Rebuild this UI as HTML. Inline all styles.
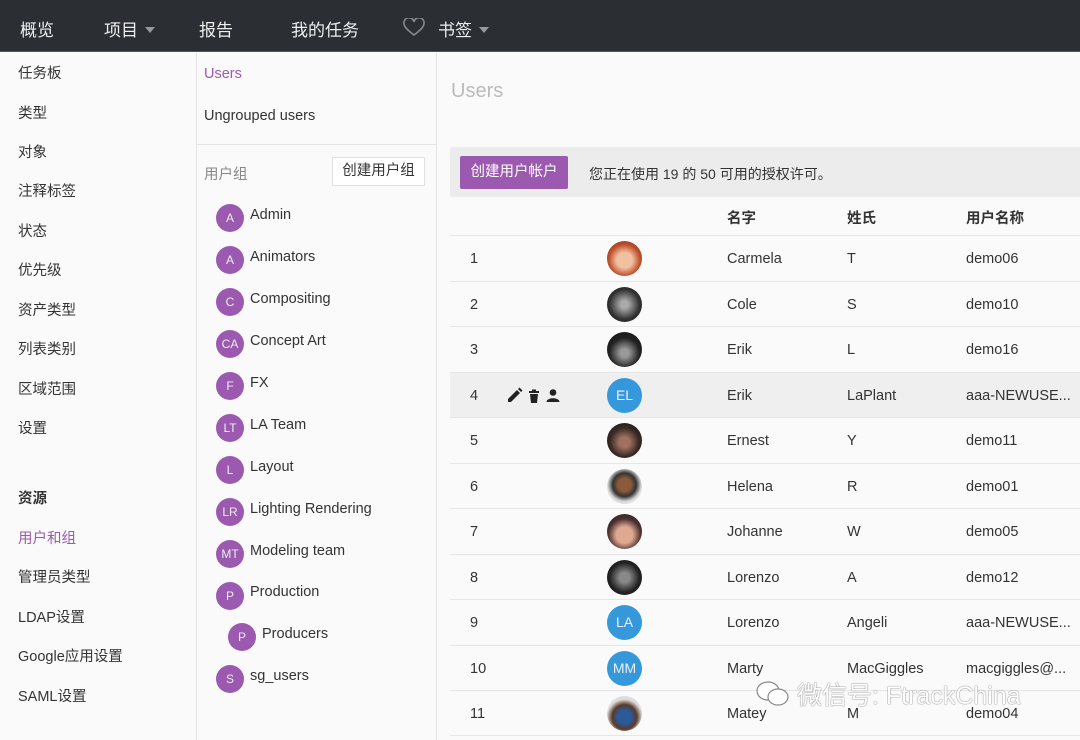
<!DOCTYPE html>
<html><head><meta charset="utf-8"><style>
*{margin:0;padding:0;box-sizing:border-box}
body{width:1080px;height:740px;overflow:hidden;background:#fafafa;font-family:"Liberation Sans","Noto Sans CJK SC",sans-serif;color:#333;position:relative}
.a{position:absolute;white-space:nowrap}
.nav{position:absolute;left:0;top:0;width:1080px;height:52px;background:#2b2e33;border-bottom:1px solid #555}
.nav .a{color:#eee;font-size:17px;top:16px}
.chev{display:inline-block;width:0;height:0;border-left:5px solid transparent;border-right:5px solid transparent;border-top:6px solid #999;margin-left:7px;position:relative;top:-3px}
.ls .a{font-size:14.5px;color:#333;left:18px}
.g{position:absolute;left:216px;width:28px;height:28px;border-radius:50%;background:#9b59b0;color:#eee;font-size:12px;text-align:center;line-height:28px}
.gt{position:absolute;left:250px;font-size:14.5px;color:#333}
.row{position:absolute;left:450px;width:630px;height:45.5px;border-top:1px solid #e6e6e6;font-size:14.5px}
.row span{position:absolute;top:15px}
.av{position:absolute;left:157px;top:5px;width:35px;height:35px;border-radius:50%}
.in{background:#3498db;color:#eef;text-align:center;line-height:35px;font-size:14px}
</style></head><body>
<div class="nav">
<div class="a" style="left:20px">概览</div>
<div class="a" style="left:104px">项目<span class="chev"></span></div>
<div class="a" style="left:199px">报告</div>
<div class="a" style="left:291px">我的任务</div>
<svg class="a" style="left:403px;top:18px" width="22" height="19" viewBox="0 0 22 19"><path d="M11 17 C3 11 1 8 1 5.5 A4.5 4.5 0 0 1 11 4 A4.5 4.5 0 0 1 21 5.5 C21 8 19 11 11 17Z" fill="none" stroke="#888" stroke-width="1.6"/></svg>
<div class="a" style="left:438px">书签<span class="chev"></span></div>
</div>
<div style="position:absolute;left:196px;top:53px;width:1px;height:687px;background:#e4e4e4"></div>
<div style="position:absolute;left:436px;top:53px;width:1px;height:687px;background:#e4e4e4"></div>
<div class="ls">
<div class="a" style="top:62px">任务板</div>
<div class="a" style="top:102px">类型</div>
<div class="a" style="top:141px">对象</div>
<div class="a" style="top:180px">注释标签</div>
<div class="a" style="top:220px">状态</div>
<div class="a" style="top:259px">优先级</div>
<div class="a" style="top:299px">资产类型</div>
<div class="a" style="top:338px">列表类别</div>
<div class="a" style="top:378px">区域范围</div>
<div class="a" style="top:417px">设置</div>
<div class="a" style="top:487px;font-weight:bold">资源</div>
<div class="a" style="top:527px;color:#9b59b0">用户和组</div>
<div class="a" style="top:566px">管理员类型</div>
<div class="a" style="top:606px">LDAP设置</div>
<div class="a" style="top:645px">Google应用设置</div>
<div class="a" style="top:685px">SAML设置</div>
</div>
<div class="a" style="left:204px;top:66px;font-size:14.5px;color:#9b59b0">Users</div>
<div class="a" style="left:204px;top:108px;font-size:14.5px">Ungrouped users</div>
<div style="position:absolute;left:197px;top:144px;width:239px;height:1px;background:#e4e4e4"></div>
<div class="a" style="left:204px;top:163px;font-size:14.5px;color:#888">用户组</div>
<div class="a" style="left:332px;top:157px;width:93px;height:29px;border:1px solid #e0e0e0;background:#fff;font-size:14.5px;text-align:center;line-height:27px">创建用户组</div>
<div class="g" style="top:204px">A</div><div class="gt a" style="top:207px">Admin</div>
<div class="g" style="top:246px">A</div><div class="gt a" style="top:249px">Animators</div>
<div class="g" style="top:288px">C</div><div class="gt a" style="top:291px">Compositing</div>
<div class="g" style="top:330px">CA</div><div class="gt a" style="top:333px">Concept Art</div>
<div class="g" style="top:372px">F</div><div class="gt a" style="top:375px">FX</div>
<div class="g" style="top:414px">LT</div><div class="gt a" style="top:417px">LA Team</div>
<div class="g" style="top:456px">L</div><div class="gt a" style="top:459px">Layout</div>
<div class="g" style="top:498px">LR</div><div class="gt a" style="top:501px">Lighting Rendering</div>
<div class="g" style="top:540px">MT</div><div class="gt a" style="top:543px">Modeling team</div>
<div class="g" style="top:582px">P</div><div class="gt a" style="top:584px">Production</div>
<div class="g" style="top:623px;left:228px">P</div><div class="gt a" style="top:626px;left:262px">Producers</div>
<div class="g" style="top:665px">S</div><div class="gt a" style="top:668px">sg_users</div>

<div class="a" style="left:451px;top:80px;font-size:20px;color:#bbb">Users</div>
<div style="position:absolute;left:450px;top:147px;width:630px;height:50px;background:#ececec"></div>
<div class="a" style="left:460px;top:156px;width:108px;height:33px;background:#9b59b0;border-radius:2px;color:#fff;font-size:14.5px;text-align:center;line-height:33px">创建用户帐户</div>
<div class="a" style="left:589px;top:164px;font-size:14px">您正在使用 19 的 50 可用的授权许可。</div>
<div class="a" style="left:727px;top:207px;font-size:14.5px;font-weight:bold">名字</div>
<div class="a" style="left:847px;top:207px;font-size:14.5px;font-weight:bold">姓氏</div>
<div class="a" style="left:966px;top:207px;font-size:14.5px;font-weight:bold">用户名称</div>

<div class="row" style="top:235px"><span style="left:20px">1</span><div class="av" style="background:radial-gradient(circle at 50% 55%,#f0c0a0 30%,#c0502a 60%,#6a3020)"></div><span style="left:277px">Carmela</span><span style="left:397px">T</span><span style="left:516px">demo06</span></div>
<div class="row" style="top:280.5px"><span style="left:20px">2</span><div class="av" style="background:radial-gradient(circle,#aaa 15%,#333 60%,#111)"></div><span style="left:277px">Cole</span><span style="left:397px">S</span><span style="left:516px">demo10</span></div>
<div class="row" style="top:326px"><span style="left:20px">3</span><div class="av" style="background:radial-gradient(circle at 50% 60%,#999 15%,#222 55%,#111)"></div><span style="left:277px">Erik</span><span style="left:397px">L</span><span style="left:516px">demo16</span></div>
<div class="row" style="top:371.5px;background:#efefef"><span style="left:20px">4</span>
<svg style="position:absolute;left:56px;top:14px" width="56" height="18" viewBox="0 0 56 18"><path d="M2 15 L2 12 L11 3 L14 6 L5 15Z M12 2 L13.5 0.5 L16.5 3.5 L15 5Z" fill="#222"/><path d="M23 4 H33 V6 H23Z M26 2.5 H30 V4 H26Z M24 7 H32 L31 16 H25Z" fill="#222"/><circle cx="47" cy="5.5" r="3.3" fill="#222"/><path d="M40.5 15 C40.5 10 53.5 10 53.5 15Z" fill="#222"/></svg>
<div class="av in">EL</div><span style="left:277px">Erik</span><span style="left:397px">LaPlant</span><span style="left:516px">aaa-NEWUSE...</span></div>
<div class="row" style="top:417px"><span style="left:20px">5</span><div class="av" style="background:radial-gradient(circle at 50% 55%,#a07060 20%,#3a2a25 55%,#111)"></div><span style="left:277px">Ernest</span><span style="left:397px">Y</span><span style="left:516px">demo11</span></div>
<div class="row" style="top:462.5px"><span style="left:20px">6</span><div class="av" style="background:radial-gradient(circle at 50% 45%,#8a5a3a 25%,#333 45%,#ddd 65%)"></div><span style="left:277px">Helena</span><span style="left:397px">R</span><span style="left:516px">demo01</span></div>
<div class="row" style="top:508px"><span style="left:20px">7</span><div class="av" style="background:radial-gradient(circle at 50% 60%,#e0a890 30%,#4a3030 60%,#2a1a1a)"></div><span style="left:277px">Johanne</span><span style="left:397px">W</span><span style="left:516px">demo05</span></div>
<div class="row" style="top:553.5px"><span style="left:20px">8</span><div class="av" style="background:radial-gradient(circle,#888 20%,#222 60%,#111)"></div><span style="left:277px">Lorenzo</span><span style="left:397px">A</span><span style="left:516px">demo12</span></div>
<div class="row" style="top:599px"><span style="left:20px">9</span><div class="av in">LA</div><span style="left:277px">Lorenzo</span><span style="left:397px">Angeli</span><span style="left:516px">aaa-NEWUSE...</span></div>
<div class="row" style="top:644.5px"><span style="left:20px">10</span><div class="av in">MM</div><span style="left:277px">Marty</span><span style="left:397px">MacGiggles</span><span style="left:516px">macgiggles@...</span></div>
<div class="row" style="top:690px;border-bottom:1px solid #e6e6e6"><span style="left:20px">11</span><div class="av" style="background:radial-gradient(circle at 50% 60%,#2a5a9a 25%,#5a3a2a 45%,#ddd 65%)"></div><span style="left:277px">Matey</span><span style="left:397px">M</span><span style="left:516px">demo04</span></div>

<svg class="a" style="left:755px;top:680px" width="36" height="28" viewBox="0 0 36 28"><g fill="#fff" stroke="#888" stroke-width="1.2"><ellipse cx="13" cy="11" rx="11" ry="9"/><ellipse cx="23" cy="17" rx="10" ry="8"/></g></svg>
<div class="a" style="left:797px;top:676px;font-size:25px;color:#fff;text-shadow:0 0 1px #666,0 0 1px #888">微信号: FtrackChina</div>
</body></html>
